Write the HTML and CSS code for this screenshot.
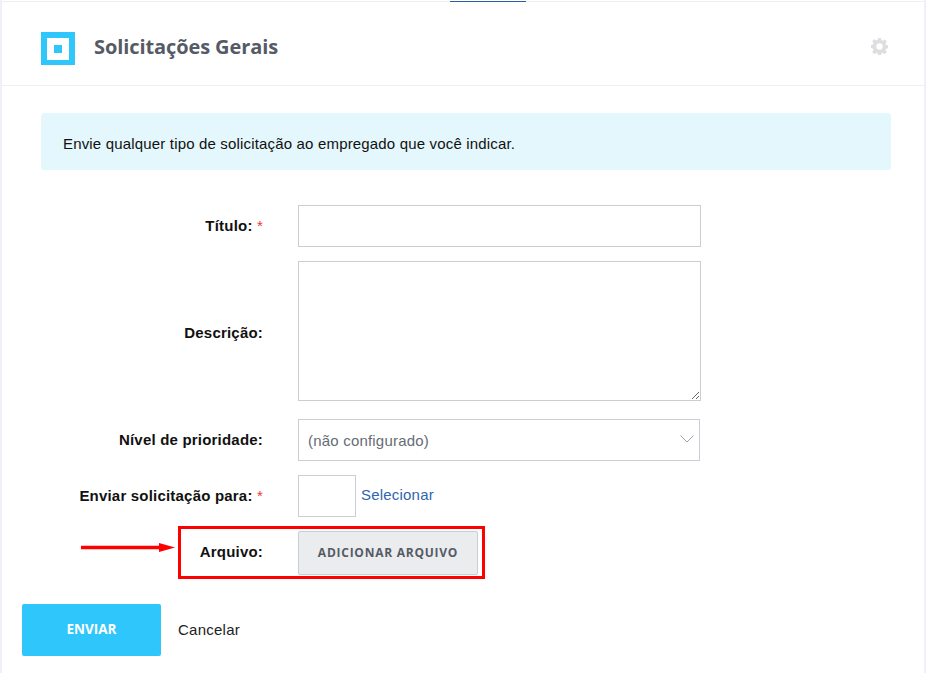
FILE: index.html
```html
<!DOCTYPE html>
<html lang="pt-BR">
<head>
<meta charset="utf-8">
<title>Solicitações Gerais</title>
<link rel="stylesheet" href="styles.css">
</head>
<body>
<div class="page">
  <div class="topline"><div class="tab-marker"></div></div>
  <header class="header">
    <div class="logo"><span class="logo-inner"><span class="logo-dot"></span></span></div>
    <h1 class="title">Solicitações Gerais</h1>
    <svg class="gear" viewBox="0 0 16 16" width="17" height="17"><path fill="#dcdee1" fill-rule="evenodd" d="M6.600 0h2.800l.4 2.200 1.200.5 1.900-1.300 2 2-1.300 1.900.5 1.200 2.200.4v2.800l-2.200.4-.5 1.200 1.300 1.900-2 2-1.900-1.300-1.200.5-.4 2.200H6.600l-.4-2.200-1.200-.5-1.900 1.300-2-2 1.300-1.900-.5-1.200L-.300 9.400V6.600l2.200-.4.500-1.200L1.100 3.100l2-2 1.900 1.300 1.200-.5zM8 5a3 3 0 1 0 0 6 3 3 0 0 0 0-6z"/></svg>
  </header>
  <main class="content">
    <p class="notice">Envie qualquer tipo de solicitação ao empregado que você indicar.</p>
    <form class="form">
      <label class="label">Título: <span class="req">*</span></label>
      <input class="field field-title" type="text">
      <label class="label label-desc">Descrição:</label>
      <textarea class="field field-desc"></textarea>
      <label class="label label-prio">Nível de prioridade:</label>
      <div class="field field-select">
        <span>(não configurado)</span>
        <svg class="chevron" viewBox="0 0 14 8" width="14" height="8"><path d="M.5.5 7 7l6.500-6.500" fill="none" stroke="#9aa2ab" stroke-width="1"/></svg>
      </div>
      <label class="label label-send">Enviar solicitação para: <span class="req">*</span></label>
      <div class="picker"><div class="field field-box"></div><a class="link" href="#">Selecionar</a></div>
      <label class="label label-file">Arquivo:</label>
      <div class="file-row"><button class="file-btn" type="button">ADICIONAR ARQUIVO</button></div>
    </form>
    <div class="actions">
      <button class="submit" type="button">ENVIAR</button>
      <a class="cancel" href="#">Cancelar</a>
    </div>
  </main>
  <div class="highlight"></div>
  <svg class="arrow" viewBox="0 0 95 10" width="95" height="10"><path d="M0 4.500h80" stroke="#f00" stroke-width="3.500"/><path d="M78 0l16 4.500-16 4.500z" fill="#f00"/></svg>
</div>
</body>
</html>
```
FILE: styles.css
```css
* { box-sizing: border-box; }
html, body { margin: 0; padding: 0; background: #fff; }
body { font-family: "Liberation Sans", Arial, sans-serif; font-size: 15px; color: #111; overflow: hidden; }
.page { position: relative; width: 926px; height: 673px; padding-top: 1px; border-left: 2px solid #eef1f5; border-right: 2px solid #eef1f5; }
.topline { position: relative; height: 1px; background: #eeeff1; }
.tab-marker { position: absolute; left: 448px; top: 0; width: 76px; height: 1px; background: #2a5caa; }
.header { height: 84px; border-bottom: 1px solid #eeeff1; display: flex; align-items: center; padding: 7px 36px 0 39px; }
.logo { width: 34px; height: 33px; background: #2fc6fb; display: flex; align-items: flex-start; justify-content: center; padding-top: 6px; margin-top: 3px; }
.logo-inner { width: 22px; height: 22px; background: #fff; display: flex; align-items: center; justify-content: center; }
.logo-dot { width: 8px; height: 8px; background: #2fc6fb; }
.title { margin: 0 0 0 19px; padding-bottom: 2px; flex: 1; font-family: "Open Sans", sans-serif; font-size: 20px; font-weight: 700; letter-spacing: -.1px; color: #555b66; }
.gear { display: block; margin-top: -1px; }
.content { padding: 27px 33px 0 20px; }
.notice { margin: 0 0 0 19px; height: 57px; padding: 3px 22px 0; display: flex; align-items: center; background: #e4f7fc; border-radius: 3px; letter-spacing: .17px; }
.form { display: grid; grid-template-columns: 241px 1fr; column-gap: 35px; align-items: center; margin-top: 35px; }
.label { text-align: right; font-weight: 700; letter-spacing: .2px; white-space: nowrap; padding-bottom: 2px; }
.req { color: #e33; font-weight: 400; }
.field { display: block; border: 1px solid #c8ced4; background: #fff; border-radius: 0; padding: 0; margin: 0; }
.field-title { width: 403px; height: 42px; }
.field-desc { width: 403px; height: 140px; margin-top: 14px; resize: vertical; }
.label-desc { margin-top: 18px; }
.field-select { width: 402px; height: 42px; margin-top: 18px; display: flex; align-items: center; justify-content: space-between; padding: 0 5px 0 9px; color: #666c74; letter-spacing: .2px; }
.label-prio { margin-top: 18px; }
.chevron { display: block; margin-top: -2px; }
.picker { display: flex; align-items: center; gap: 5px; margin-top: 14px; }
.label-send { margin-top: 14px; }
.field-box { width: 58px; height: 42px; }
.link { color: #2f66ad; text-decoration: none; letter-spacing: .2px; margin-top: -3px; }
.file-row { margin-top: 14px; }
.label-file { margin-top: 12px; }
.file-btn { display: block; width: 180px; height: 44px; border: 1px solid #c8ced4; border-radius: 2px; background: #ebecee; color: #555b66; font-family: "Open Sans", sans-serif; font-size: 12px; font-weight: 700; letter-spacing: .75px; padding: 0 0 2px; }
.actions { display: flex; align-items: center; margin-top: 29px; }
.submit { width: 139px; height: 52px; border: 0; border-radius: 2px; background: #2fc6fb; color: #fff; font-family: "Open Sans", sans-serif; font-size: 13.500px; font-weight: 700; padding: 0 0 2px; }
.cancel { margin-left: 17px; padding-bottom: 2px; color: #222; text-decoration: none; letter-spacing: .25px; }
.highlight { position: absolute; left: 176px; top: 526px; width: 307px; height: 53px; border: 3px solid #f00; }
.arrow { position: absolute; left: 79px; top: 543px; }
```
